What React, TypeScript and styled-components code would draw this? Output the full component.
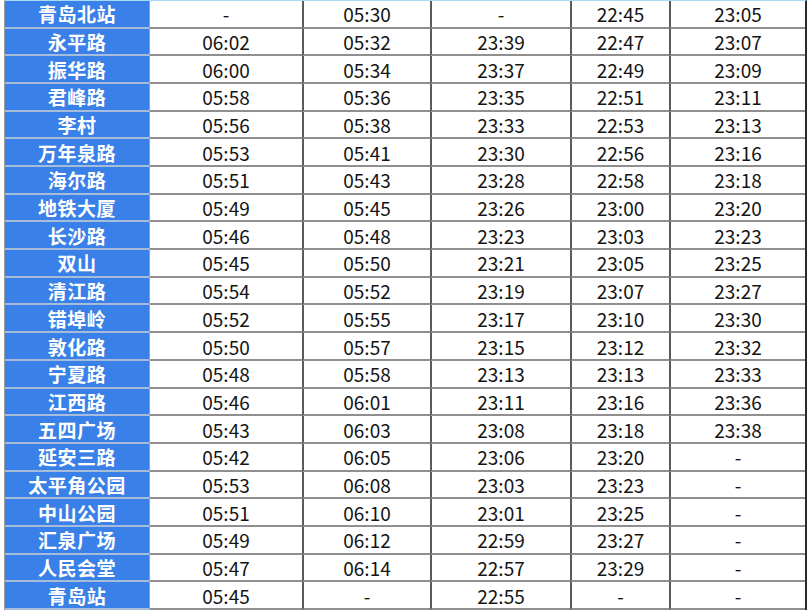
import React from "react";
import styled, { createGlobalStyle } from "styled-components";

const Global = createGlobalStyle`
  html, body { margin: 0; padding: 0; background: #ffffff; }
  body { font-family: "Noto Sans CJK SC", "Noto Sans", sans-serif; }
`;

const rows: string[][] = [
  ["青岛北站", "-", "05:30", "-", "22:45", "23:05"],
  ["永平路", "06:02", "05:32", "23:39", "22:47", "23:07"],
  ["振华路", "06:00", "05:34", "23:37", "22:49", "23:09"],
  ["君峰路", "05:58", "05:36", "23:35", "22:51", "23:11"],
  ["李村", "05:56", "05:38", "23:33", "22:53", "23:13"],
  ["万年泉路", "05:53", "05:41", "23:30", "22:56", "23:16"],
  ["海尔路", "05:51", "05:43", "23:28", "22:58", "23:18"],
  ["地铁大厦", "05:49", "05:45", "23:26", "23:00", "23:20"],
  ["长沙路", "05:46", "05:48", "23:23", "23:03", "23:23"],
  ["双山", "05:45", "05:50", "23:21", "23:05", "23:25"],
  ["清江路", "05:54", "05:52", "23:19", "23:07", "23:27"],
  ["错埠岭", "05:52", "05:55", "23:17", "23:10", "23:30"],
  ["敦化路", "05:50", "05:57", "23:15", "23:12", "23:32"],
  ["宁夏路", "05:48", "05:58", "23:13", "23:13", "23:33"],
  ["江西路", "05:46", "06:01", "23:11", "23:16", "23:36"],
  ["五四广场", "05:43", "06:03", "23:08", "23:18", "23:38"],
  ["延安三路", "05:42", "06:05", "23:06", "23:20", "-"],
  ["太平角公园", "05:53", "06:08", "23:03", "23:23", "-"],
  ["中山公园", "05:51", "06:10", "23:01", "23:25", "-"],
  ["汇泉广场", "05:49", "06:12", "22:59", "23:27", "-"],
  ["人民会堂", "05:47", "06:14", "22:57", "23:29", "-"],
  ["青岛站", "05:45", "-", "22:55", "-", "-"],
];

const Wrap = styled.div`
  width: 810px;
  height: 614px;
  padding-left: 4px;
  box-sizing: border-box;
  overflow: hidden;
`;

const Table = styled.div`
  display: grid;
  grid-template-columns: 145px 152px 128px 140px 99px 136px;
  grid-template-rows: repeat(22, 1fr);
  height: 610px;
  width: 803px;
  box-sizing: border-box;
  border-left: 1px solid #9a9a9a;
  border-right: 2px solid #2a2a2a;
  border-top: 1px solid #a9dcf2;
`;

const Station = styled.div`
  background: #3a80e9;
  color: #ffffff;
  font-weight: 700;
  font-size: 19px;
  display: flex;
  align-items: center;
  justify-content: center;
  border-bottom: 2px solid #a6bcd9;
  border-right: 1px solid #6fa3ef;
  letter-spacing: 0.5px;
  line-height: 1;
`;

const Cell = styled.div<{ $divider: boolean }>`
  color: #141414;
  font-size: 19px;
  display: flex;
  align-items: center;
  justify-content: center;
  border-bottom: 2px solid #8f8f8f;
  border-left: ${(p) => (p.$divider ? "2px solid #5a5a5a" : "none")};
  line-height: 1;
`;

export default function App() {
  return (
    <Wrap>
      <Global />
      <Table>
        {rows.map((r, i) => (
          <React.Fragment key={i}>
            <Station>{r[0]}</Station>
            {r.slice(1).map((v, j) => (
              <Cell key={j} $divider={j > 0}>
                {v}
              </Cell>
            ))}
          </React.Fragment>
        ))}
      </Table>
    </Wrap>
  );
}
